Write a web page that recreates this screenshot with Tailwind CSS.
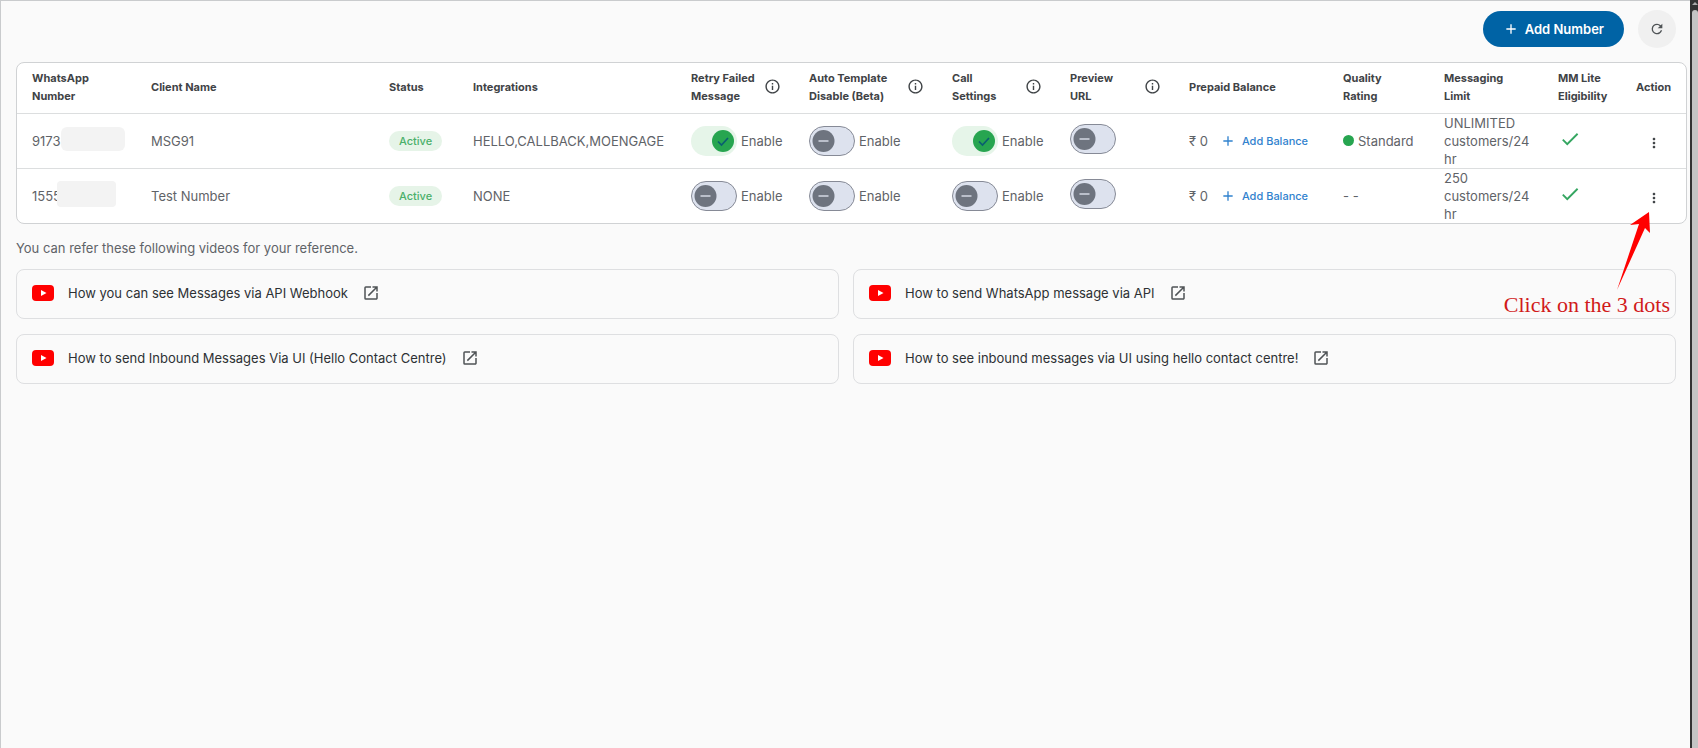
<!DOCTYPE html>
<html lang="en">
<head>
<meta charset="utf-8">
<meta name="viewport" content="width=device-width, initial-scale=1">
<title>WhatsApp Numbers</title>
<script src="https://cdn.jsdelivr.net/npm/@tailwindcss/browser@4"></script>
</head>
<body class="flex min-h-screen bg-[#fafafa] font-['Inter',sans-serif] text-sm text-[#5f6368]">
<svg class="hidden">
  <symbol id="info" viewBox="0 0 24 24"><path fill="currentColor" d="M11 7h2v2h-2zm0 4h2v6h-2zm1-9C6.480 2 2 6.480 2 12s4.480 10 10 10 10-4.480 10-10S17.520 2 12 2zm0 18c-4.410 0-8-3.590-8-8s3.590-8 8-8 8 3.590 8 8-3.590 8-8 8z"/></symbol>
  <symbol id="plus" viewBox="0 0 24 24"><path fill="currentColor" d="M19 13h-6v6h-2v-6H5v-2h6V5h2v6h6z"/></symbol>
  <symbol id="dots" viewBox="0 0 24 24"><path fill="currentColor" d="M12 8c1.100 0 2-.9 2-2s-.9-2-2-2-2 .9-2 2 .9 2 2 2zm0 2c-1.100 0-2 .9-2 2s.9 2 2 2 2-.9 2-2-.9-2-2-2zm0 6c-1.100 0-2 .9-2 2s.9 2 2 2 2-.9 2-2-.9-2-2-2z"/></symbol>
  <symbol id="check" viewBox="0 0 24 24"><path fill="currentColor" d="M9 16.170 4.830 12l-1.420 1.410L9 19 21 7l-1.410-1.410z"/></symbol>
  <symbol id="open" viewBox="0 0 24 24"><path fill="currentColor" d="M19 19H5V5h7V3H5a2 2 0 0 0-2 2v14a2 2 0 0 0 2 2h14c1.100 0 2-.9 2-2v-7h-2v7zM14 3v2h3.590l-9.830 9.830 1.410 1.410L19 6.410V10h2V3h-7z"/></symbol>
  <symbol id="youtube" viewBox="0 0 22 16"><rect width="22" height="16" rx="4" fill="#f00"/><path fill="#fff" d="M9 5v6l5.500-3z"/></symbol>
  <symbol id="on" viewBox="0 0 46 30"><rect width="46" height="30" rx="15" fill="#e6f5e9"/><circle cx="32" cy="15" r="11" fill="#27a550"/><path d="m27 15.500 3.500 3.500 6.500-7" fill="none" stroke="#0a5f70" stroke-width="1.700"/></symbol>
  <symbol id="off" viewBox="0 0 46 30"><rect x=".5" y=".5" width="45" height="29" rx="14.500" fill="#dde2ee" stroke="#868a96"/><circle cx="14.500" cy="15" r="11" fill="#6e747f"/><path d="M9.500 15h10" stroke="#d5d9e3" stroke-width="1.500"/></symbol>
</svg>

<div class="flex min-w-0 flex-1 flex-col border-t border-l border-[#c9cbcd] pl-[15px]">
  <header class="flex items-center justify-end gap-3.5 pt-[9px] pr-3.5">
    <button class="flex h-9 items-center gap-1.5 rounded-full bg-[#0063a5] px-5 text-[13px] font-semibold text-white"><svg class="size-4"><use href="#plus"/></svg>Add Number</button>
    <button aria-label="Refresh" class="flex size-[38px] items-center justify-center rounded-full bg-[#f0f0f0] text-[#4f5356]"><svg class="size-4" viewBox="0 0 24 24"><path fill="currentColor" d="M17.650 6.350A7.960 7.960 0 0 0 12 4a8 8 0 1 0 7.730 10h-2.080A6 6 0 1 1 12 6c1.660 0 3.140.69 4.220 1.780L13 11h7V4z"/></svg></button>
  </header>

  <main class="flex flex-col">
    <div class="relative mt-3.5 mr-[3px] rounded-lg border border-[#d0d2d4] bg-white">
      <table class="w-full table-fixed border-collapse text-left">
        <colgroup><col class="w-[134px]"><col><col class="w-[84px]"><col class="w-[218px]"><col class="w-[118px]"><col class="w-[143px]"><col class="w-[118px]"><col class="w-[119px]"><col class="w-[154px]"><col class="w-[101px]"><col class="w-[114px]"><col class="w-[78px]"><col class="w-[50px]"></colgroup>
        <thead class="text-[11px] leading-[18px] text-[#3f4346]">
          <tr class="h-[50px] border-b border-[#dcdedf] [&>th]:p-0 [&>th]:pb-0.5 [&>th]:font-bold">
            <th><div class="pl-[15px]">WhatsApp<br>Number</div></th>
            <th>Client Name</th>
            <th>Status</th>
            <th>Integrations</th>
            <th><div class="flex items-center justify-between pr-7"><span>Retry Failed<br>Message</span><svg class="size-[17px]"><use href="#info"/></svg></div></th>
            <th><div class="flex items-center justify-between pr-7"><span>Auto Template<br>Disable (Beta)</span><svg class="size-[17px]"><use href="#info"/></svg></div></th>
            <th><div class="flex items-center justify-between pr-7"><span>Call<br>Settings</span><svg class="size-[17px]"><use href="#info"/></svg></div></th>
            <th><div class="flex items-center justify-between pr-7"><span>Preview<br>URL</span><svg class="size-[17px]"><use href="#info"/></svg></div></th>
            <th>Prepaid Balance</th>
            <th>Quality<br>Rating</th>
            <th>Messaging<br>Limit</th>
            <th>MM Lite<br>Eligibility</th>
            <th>Action</th>
          </tr>
        </thead>
        <tbody class="text-[13px] leading-[18px] [&_td]:p-0">
          <tr class="h-[55px] border-b border-[#dcdedf]">
            <td><div class="flex items-center pl-[15px]">9173<span class="-mt-1 h-6 w-16 rounded-md bg-[#f3f3f3]"></span></div></td>
            <td>MSG91</td>
            <td><span class="inline-block rounded-full bg-[#e6f4e8] px-2.5 py-px text-[11px] font-medium text-[#4bb06a]">Active</span></td>
            <td>HELLO,CALLBACK,MOENGAGE</td>
            <td><button role="switch" aria-checked="true" class="flex items-center gap-1"><svg class="h-[30px] w-[46px]"><use href="#on"/></svg>Enable</button></td>
            <td><button role="switch" aria-checked="false" class="flex items-center gap-1"><svg class="h-[30px] w-[46px]"><use href="#off"/></svg>Enable</button></td>
            <td><button role="switch" aria-checked="true" class="flex items-center gap-1"><svg class="h-[30px] w-[46px]"><use href="#on"/></svg>Enable</button></td>
            <td><button role="switch" aria-checked="false" aria-label="Preview URL" class="mb-1 block"><svg class="h-[30px] w-[46px]"><use href="#off"/></svg></button></td>
            <td><div class="flex items-center"><span>₹ 0</span><button class="ml-3 flex items-center gap-1.5 text-[11px] font-medium text-[#3182ce]"><svg class="size-4"><use href="#plus"/></svg>Add Balance</button></div></td>
            <td><div class="flex items-center gap-1"><span class="size-[11px] rounded-full bg-[#27a550]"></span>Standard</div></td>
            <td>UNLIMITED<br>customers/24<br>hr</td>
            <td><svg class="mb-1 ml-px size-[22px] text-[#35a661]" aria-label="Eligible"><use href="#check"/></svg></td>
            <td><button aria-label="Actions" class="mt-1 ml-2.5 block text-[#3f4346]"><svg class="size-4"><use href="#dots"/></svg></button></td>
          </tr>
          <tr class="h-[55px]">
            <td><div class="flex items-center pl-[15px]">1555<span class="-mt-1 -ml-1 h-[26px] w-[59px] rounded-sm bg-[#f3f3f3]"></span></div></td>
            <td>Test Number</td>
            <td><span class="inline-block rounded-full bg-[#e6f4e8] px-2.5 py-px text-[11px] font-medium text-[#4bb06a]">Active</span></td>
            <td>NONE</td>
            <td><button role="switch" aria-checked="false" class="flex items-center gap-1"><svg class="h-[30px] w-[46px]"><use href="#off"/></svg>Enable</button></td>
            <td><button role="switch" aria-checked="false" class="flex items-center gap-1"><svg class="h-[30px] w-[46px]"><use href="#off"/></svg>Enable</button></td>
            <td><button role="switch" aria-checked="false" class="flex items-center gap-1"><svg class="h-[30px] w-[46px]"><use href="#off"/></svg>Enable</button></td>
            <td><button role="switch" aria-checked="false" aria-label="Preview URL" class="mb-1 block"><svg class="h-[30px] w-[46px]"><use href="#off"/></svg></button></td>
            <td><div class="flex items-center"><span>₹ 0</span><button class="ml-3 flex items-center gap-1.5 text-[11px] font-medium text-[#3182ce]"><svg class="size-4"><use href="#plus"/></svg>Add Balance</button></div></td>
            <td>- -</td>
            <td>250<br>customers/24<br>hr</td>
            <td><svg class="mb-1 ml-px size-[22px] text-[#35a661]" aria-label="Eligible"><use href="#check"/></svg></td>
            <td><button aria-label="Actions" class="mt-1 ml-2.5 block text-[#3f4346]"><svg class="size-4"><use href="#dots"/></svg></button></td>
          </tr>
        </tbody>
      </table>
      <!-- Callout pointing at the row menu -->
      <div class="pointer-events-none absolute top-[148px] right-4 flex w-max flex-col items-end gap-0.5 font-['Liberation_Serif',serif] text-[22px] leading-6 text-[#d11a1a]">
        <svg class="mr-5 h-20 w-[34px]" viewBox="0 0 34 80"><path fill="#f00" d="M33 1 14 14l9-1L1 79l28-62 5 5z"/></svg>
        <span>Click on the 3 dots</span>
      </div>
    </div>

    <p class="mt-3.5 text-[13px] leading-5">You can refer these following videos for your reference.</p>

    <section class="mt-[11px] mr-3.5 grid grid-cols-2 gap-x-3.5 gap-y-[15px] text-[13px] text-[#2d3134] [&>a]:flex [&>a]:h-[50px] [&>a]:items-center [&>a]:rounded-lg [&>a]:border [&>a]:border-[#dedfe1] [&>a]:px-[15px] [&>a]:pb-0.5">
      <a href="#"><svg class="mr-3.5 h-4 w-[22px]"><use href="#youtube"/></svg>How you can see Messages via API Webhook<svg class="ml-3.5 size-[18px] text-[#4f5356]"><use href="#open"/></svg></a>
      <a href="#"><svg class="mr-3.5 h-4 w-[22px]"><use href="#youtube"/></svg>How to send WhatsApp message via API<svg class="ml-3.5 size-[18px] text-[#4f5356]"><use href="#open"/></svg></a>
      <a href="#"><svg class="mr-3.5 h-4 w-[22px]"><use href="#youtube"/></svg>How to send Inbound Messages Via UI (Hello Contact Centre)<svg class="ml-3.5 size-[18px] text-[#4f5356]"><use href="#open"/></svg></a>
      <a href="#"><svg class="mr-3.5 h-4 w-[22px]"><use href="#youtube"/></svg>How to see inbound messages via UI using hello contact centre!<svg class="ml-3.5 size-[18px] text-[#4f5356]"><use href="#open"/></svg></a>
    </section>
  </main>
</div>

<!-- Window scrollbar -->
<div class="flex w-2 shrink-0 flex-col border-l-2 border-[#333] bg-[#333]">
  <svg class="h-2.5 w-full" viewBox="0 0 6 10"><path fill="#aaa" d="M0 5 3 2l3 3z"/></svg>
  <div class="flex-1 rounded-t-sm bg-[#c4c4c4]"></div>
</div>
</body>
</html>
